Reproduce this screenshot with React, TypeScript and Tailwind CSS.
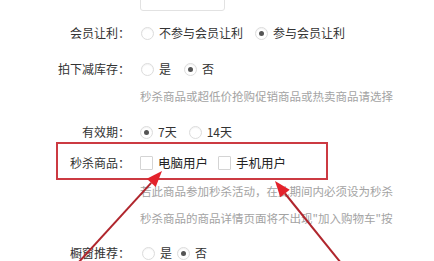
import React from 'react';

const Radio: React.FC<{ checked?: boolean }> = ({ checked }) => (
  <span className="w-[13px] h-[13px] rounded-full border border-[#dcdcdc] bg-white shadow-[inset_0_1px_1px_rgba(0,0,0,0.05)] flex items-center justify-center shrink-0">
    {checked && <span className="w-[5px] h-[5px] rounded-full bg-[#555]" />}
  </span>
);

const Checkbox: React.FC = () => (
  <span className="w-[13px] h-[14px] rounded-[1px] border border-[#d4d4d4] bg-white shrink-0" />
);

const Label: React.FC<{ text: string; width?: string }> = ({ text, width = 'w-[130px]' }) => (
  <div className={`${width} text-right text-[#333] shrink-0`}>{text}</div>
);

const Hint: React.FC<{ text: string; className?: string }> = ({ text, className = '' }) => (
  <div className={`w-[400px] h-[20px] pl-[140px] flex items-center whitespace-nowrap text-[11.5px] text-[#a3a3a3] ${className}`}>
    {text}
  </div>
);

const App: React.FC = () => {
  return (
    <div className="relative w-[434px] h-[261px] overflow-hidden bg-white font-['Noto_Sans_CJK_SC',sans-serif] text-[12px] text-[#333]">
      <div className="flex flex-col">
        {/* input cut off at the top */}
        <div className="ml-[140px] w-[85px] h-[23px] -mt-[12px] border border-[#e2e2e2] rounded-[3px] bg-white" />

        {/* 会员让利 */}
        <div className="flex items-center h-[24px] mt-[10px]">
          <Label text="会员让利：" />
          <div className="flex items-center pl-[11px]">
            <Radio />
            <span className="ml-[5px] mr-[12px]">不参与会员让利</span>
            <Radio checked />
            <span className="ml-[5px]">参与会员让利</span>
          </div>
        </div>

        {/* 拍下减库存 */}
        <div className="flex items-center h-[24px] mt-[12px]">
          <Label text="拍下减库存：" />
          <div className="flex items-center pl-[11px]">
            <Radio />
            <span className="ml-[5px] mr-[13px]">是</span>
            <Radio checked />
            <span className="ml-[5px]">否</span>
          </div>
        </div>

        <Hint text="秒杀商品或超低价抢购促销商品或热卖商品请选择" className="mt-[6px]" />

        {/* 有效期 */}
        <div className="flex items-center h-[20px] mt-[15px]">
          <Label text="有效期：" />
          <div className="flex items-center pl-[10px]">
            <Radio checked />
            <span className="ml-[5px] mr-[12px]">7天</span>
            <Radio />
            <span className="ml-[5px]">14天</span>
          </div>
        </div>

        {/* 秒杀商品 - highlighted */}
        <div className="ml-[56px] w-[272px] h-[38px] border-2 border-[#cc3a42] flex items-center pt-[4px]">
          <Label text="秒杀商品：" width="w-[72px]" />
          <div className="flex items-center pl-[10px] text-[12.5px] text-[#222]">
            <Checkbox />
            <span className="ml-[5px] mr-[10px]">电脑用户</span>
            <Checkbox />
            <span className="ml-[5px]">手机用户</span>
          </div>
        </div>

        <Hint text="若此商品参加秒杀活动，在此期间内必须设为秒杀" className="mt-[2px]" />
        <Hint text={'秒杀商品的商品详情页面将不出现"加入购物车"按'} className="mt-[7px]" />

        {/* 橱窗推荐 */}
        <div className="flex items-center h-[24px] mt-[12px]">
          <Label text="橱窗推荐：" />
          <div className="flex items-center pl-[12px]">
            <Radio />
            <span className="ml-[5px] mr-[5px]">是</span>
            <Radio checked />
            <span className="ml-[5px]">否</span>
          </div>
        </div>
      </div>

      {/* annotation arrows */}
      <svg className="absolute inset-0 pointer-events-none" width="434" height="261" viewBox="0 0 434 261">
        <line x1="78" y1="263" x2="151.2" y2="182.8" stroke="#b0262d" strokeWidth="2" />
        <polygon points="162,171 155.7,186.9 146.8,178.8" fill="#e3222b" />
        <line x1="341" y1="263" x2="285" y2="193.5" stroke="#b0262d" strokeWidth="2" />
        <polygon points="275,181 289.7,189.7 280.3,197.2" fill="#e3222b" />
      </svg>
    </div>
  );
};

export default App;
